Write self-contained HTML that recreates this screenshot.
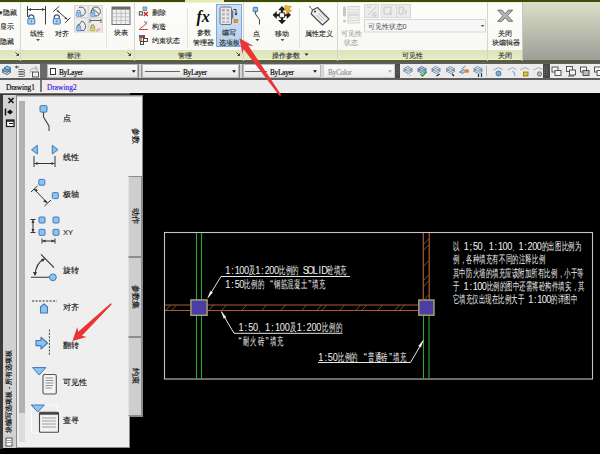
<!DOCTYPE html>
<html><head><meta charset="utf-8">
<style>
*{margin:0;padding:0;box-sizing:border-box}
html,body{width:600px;height:454px;overflow:hidden;background:#000;font-family:"Liberation Sans",sans-serif}
.a{position:absolute}
#rib{left:0;top:0;width:600px;height:61px;background:linear-gradient(#fdfdfa,#f7f8f3)}
.t{position:absolute;font-size:7.3px;line-height:9px;color:#262626;white-space:nowrap;-webkit-text-stroke:0.12px currentColor}
.ti{color:#333}
.cmbt{color:#4a4a4a;-webkit-text-stroke:0 !important}
.g{color:#aaa}
.sep{position:absolute;width:1px;background:#e2e2e2}
.psep{position:absolute;width:1px;background:#d6d6d0;top:2px;height:59px}
.ttl{position:absolute;top:50px;height:10px;background:linear-gradient(#dce3bc,#e6ecc8)}
.dl{position:absolute;font-size:6px;color:#444}
.cmb{position:absolute;top:64px;height:14px;background:linear-gradient(#fdfdfd,#e4e4e4);border:1px solid #b8b8b8}
.tri{position:absolute;width:0;height:0;border-left:3px solid transparent;border-right:3px solid transparent;border-top:4px solid #111}
.ico{position:absolute}
.pt{position:absolute;font-size:8px;line-height:9px;color:#141414;white-space:nowrap;-webkit-text-stroke:0.15px currentColor}
.dt{position:absolute;font-size:8px;line-height:9px;color:#e6e6e6;white-space:nowrap;letter-spacing:0}
</style></head><body>
<!-- ribbon -->
<div id="rib" class="a"></div>
<div class="a" style="left:0;top:0;width:600px;height:2px;background:#3d4a0c"></div>
<div class="a" style="left:185px;top:0;width:39px;height:2px;background:#e4ecb4"></div>
<div class="a" style="left:0;top:2px;width:523px;height:1px;background:#eef3d2"></div>
<!-- right gradient area -->
<div class="a" style="left:523px;top:2px;width:77px;height:59px;background:linear-gradient(#dcdfc6,#9c9d98)"></div>
<!-- title bars -->
<div class="ttl" style="left:0;width:523px"></div>
<div class="a" style="left:0;top:59px;width:523px;height:1px;background:#eef5c0"></div>
<div class="a" style="left:0;top:60px;width:600px;height:2px;background:linear-gradient(#5e6a2a,#505440)"></div>
<!-- panel separators -->
<div class="psep" style="left:20px"></div>
<div class="psep" style="left:134px"></div>
<div class="psep" style="left:243px"></div>
<div class="psep" style="left:337px"></div>
<div class="psep" style="left:487px"></div>
<div class="a" style="left:522px;top:2px;width:1px;height:59px;background:#c8c8c0"></div>
<!-- inner separators -->
<div class="sep" style="left:106px;top:8px;height:40px"></div>
<div class="sep" style="left:187px;top:8px;height:40px"></div>
<div class="sep" style="left:299px;top:8px;height:40px"></div>



<!-- ribbon icons -->
<div class="a" style="left:216px;top:4px;width:26px;height:43px;background:linear-gradient(#cfe2f7,#b5d2f0);border:1px solid #7fa6d6"></div>
<svg class="a" style="left:0;top:0" width="600" height="61" viewBox="0 0 600 61">
 <defs>
  <g id="lock"><path d="M1.5 4.5 V3 a2.5 2.5 0 0 1 5 0 V4.5" fill="none" stroke="#3e5878" stroke-width="1.3"/><rect x="0.5" y="4.3" width="7" height="5.5" rx="0.8" fill="#a6d2f4" stroke="#3a74b0" stroke-width="0.9"/><rect x="3.5" y="6" width="1" height="2" fill="#3a74b0"/></g>
 </defs>
 <!-- linear -->
 <path d="M27.5 6 V17 M45.5 6 V24.5 M28 9.5 H45" stroke="#404040" stroke-width="1" fill="none"/>
 <path d="M28 9.5 l3 -1.6 v3.2z M45 9.5 l-3 -1.6 v3.2z" fill="#404040"/>
 <use href="#lock" x="27.3" y="14.3"/>
 <path d="M36 39 l2 2.2 l2 -2.2z" fill="#555"/>
 <!-- align -->
 <path d="M56.5 10 L67.5 19.5 M53.2 11.7 L59.2 6.2 M65.2 22.8 L70.3 17.7" stroke="#404040" stroke-width="1" fill="none"/>
 <path d="M56.5 10 l3.2 1 l-1.4 1.6z M67.5 19.5 l-3.2 -1 l1.4 -1.6z" fill="#404040"/>
 <use href="#lock" x="52.8" y="14.3"/>
 <!-- 4 grid -->
 <g fill="#ededed" stroke="#d8d8d8" stroke-width="1">
  <rect x="74.5" y="5.5" width="13.5" height="12"/><rect x="88.5" y="5.5" width="14" height="12"/>
  <rect x="74.5" y="18" width="13.5" height="14"/><rect x="88.5" y="18" width="14" height="14"/>
 </g>
 <g fill="none" stroke="#555" stroke-width="0.9">
  <path d="M79 7.5 A4.5 4.5 0 1 1 80 16"/>
  <circle cx="96" cy="11.5" r="4.5"/><path d="M92 8 L99 14"/>
  <path d="M77 30.5 L84 30.5 M78 26 L82 21 A6 6 0 0 1 84 30.5"/>
  <path d="M90 20.5 H101 M90 19 V23 M101 19 V23"/>
 </g>
 <g transform="translate(76,10) scale(0.65)"><use href="#lock"/></g>
 <g transform="translate(90,10) scale(0.65)"><use href="#lock"/></g>
 <g transform="translate(76,24.5) scale(0.65)"><use href="#lock"/></g>
 <g transform="translate(90,24.5) scale(0.65)"><path d="M1.5 4.5 V3 a2.5 2.5 0 0 1 5 0 V4.5" fill="none" stroke="#5a5a30" stroke-width="1.3"/><rect x="0.5" y="4.3" width="7" height="5.5" rx="0.8" fill="#e8d050" stroke="#9a8a20" stroke-width="0.9"/></g>
 <text x="96.5" y="31" font-size="5" fill="#c03030" font-family="Liberation Serif" font-style="italic">f2</text>
 <!-- table -->
 <rect x="112" y="7" width="18" height="17.5" fill="#f0f0f0" stroke="#6e6e6e" stroke-width="1"/>
 <rect x="112" y="7" width="18" height="2.6" fill="#6a6a6a"/>
 <path d="M112.5 13.3 H129.5 M112.5 16.9 H129.5 M112.5 20.6 H129.5 M116.5 9.6 V24 M121 9.6 V24 M125.5 9.6 V24" stroke="#b8b8b8" stroke-width="0.8"/>
 <!-- delete/construct/state -->
 <rect x="143" y="7" width="3.8" height="3.4" fill="#8cc0e8" stroke="#4a80b0" stroke-width="0.7"/>
 <rect x="139.3" y="11.8" width="3" height="3.2" fill="none" stroke="#333" stroke-width="0.9"/>
 <path d="M143.8 12 L147.8 16 M147.8 12 L143.8 16" stroke="#d02020" stroke-width="1.3"/>
 <path d="M139 29.5 H148 M139.5 29 L146 24" stroke="#d03030" stroke-width="0.9"/>
 <path d="M144.5 21 l1 2.5 M147 21.5 l-1 3" stroke="#3080c0" stroke-width="0.9"/>
 <path d="M146.5 22.5 l-1.2 2.5" stroke="#e08020" stroke-width="0.9"/>
 <rect x="139" y="35" width="3" height="3" fill="#3070b0"/><rect x="142" y="35" width="3" height="3" fill="#c03040"/>
 <rect x="139" y="38" width="3" height="3" fill="#d09040"/><rect x="143.5" y="38.5" width="4" height="3" fill="none" stroke="#333" stroke-width="0.9"/>
 <rect x="140.5" y="41.5" width="3" height="3" fill="none" stroke="#333" stroke-width="0.9"/>
 <!-- fx -->
 <text x="196.5" y="21.5" font-size="16" font-weight="bold" font-family="Liberation Serif" font-style="italic" fill="#111">fx</text>
 <!-- palette icon -->
 <rect x="220" y="7" width="11.5" height="17.5" rx="1.5" fill="#e8e8ec" stroke="#6a7280" stroke-width="1"/>
 <g fill="#c8a0a0"><rect x="222" y="9" width="2.8" height="2.5"/><rect x="226.5" y="9" width="2.8" height="2.5" fill="#d8a090"/></g>
 <g fill="#b8b8c0"><rect x="222" y="13" width="2.8" height="2.5"/><rect x="226.5" y="13" width="2.8" height="2.5"/><rect x="222" y="17" width="2.8" height="2.5"/><rect x="226.5" y="17" width="2.8" height="2.5"/><rect x="222" y="21" width="2.8" height="2"/><rect x="226.5" y="21" width="2.8" height="2"/></g>
 <rect x="231.5" y="10.5" width="1.8" height="8" fill="#6a7280"/>
 <path d="M233.5 9.5 H236 V14.5" fill="none" stroke="#222" stroke-width="0.9"/><path d="M234.5 13.5 h3 l-1.5 2z" fill="#222"/>
 <rect x="234" y="19.3" width="3.6" height="3.4" fill="#f0a020" stroke="#c07010" stroke-width="0.6"/>
 <!-- point -->
 <rect x="253.2" y="7.3" width="4.4" height="4.4" rx="0.6" fill="#8cc4ee" stroke="#3a6fa8" stroke-width="0.9"/>
 <path d="M255.4 11.7 V14 L259.5 19.5 V24.5" fill="none" stroke="#404040" stroke-width="1"/>
 <path d="M255.3 39 l2 2.2 l2 -2.2z" fill="#555"/>
 <!-- move -->
 <g fill="#1e1e1e">
  <path d="M282 6 l-4 4.2 h8z M282 24.2 l-4 -4.2 h8z M272.6 15.1 l4.2 -4 v8z M291 15.1 l-4.2 -4 v8z"/>
  <rect x="280.8" y="9.5" width="2.4" height="11.5"/><rect x="276" y="13.9" width="11.5" height="2.4"/>
 </g>
 <rect x="279.6" y="12.8" width="4.8" height="4.6" fill="#fff" stroke="#333" stroke-width="0.9"/>
 <path d="M285 5.5 L291.5 6.5 L288.5 9.5 L291.5 10.5 L285.5 15 L287.5 11 L284.5 10z" fill="#f2b52e" stroke="#a8700c" stroke-width="0.5"/>
 <path d="M280.5 39 l2 2.2 l2 -2.2z" fill="#555"/>
 <!-- tag -->
 <path d="M309.5 6 C310.5 9 313 10 315.5 11.5" fill="none" stroke="#444" stroke-width="0.9"/>
 <path d="M312.5 10 L317.5 7.5 L329 19 L322.5 25 L311.2 14z" fill="#eceef2" stroke="#4a4a4a" stroke-width="1.1" stroke-linejoin="round"/>
 <circle cx="315" cy="11.5" r="1.1" fill="#444"/>
 <path d="M318.5 13.5 L324.5 19.5 M320.3 11.8 L326.3 17.8 M316.8 15.3 L322.3 20.8" stroke="#8a9aa0" stroke-width="0.7"/>
 <!-- visibility state (disabled) -->
 <rect x="343" y="6.5" width="3" height="10" rx="1.2" fill="#c8c8c8"/><circle cx="344.5" cy="21" r="1.6" fill="#c8c8c8"/>
 <rect x="348" y="6.5" width="11" height="16.5" fill="#f4f4f4" stroke="#cfcfcf" stroke-width="0.9"/>
 <path d="M349 9.5 H358 M349 12 H358 M349 15 H358 M349 18 H358 M349 20.5 H358" stroke="#d0d0d0" stroke-width="0.8"/>
 <rect x="348.5" y="13.5" width="10" height="2.6" fill="#dadada"/>
 <g fill="#ececec" stroke="#d8d8d8" stroke-width="1">
  <rect x="364.5" y="4.5" width="14" height="13"/><rect x="381" y="4.5" width="15.5" height="13"/><rect x="396.5" y="4.5" width="14" height="13"/>
 </g>
 <g fill="none" stroke="#c4c4c4" stroke-width="0.9"><path d="M367 7 H371 M368 15 L376 7 M373 13 h3 v3 h-3z"/><path d="M384 7 h7 v7 h-7z M389 12 l3 3"/><path d="M399 7 h4 v7 h-4z M404 9 l3 3 l-2 0.5 l1 2"/></g>
 <rect x="364.5" y="19.5" width="121" height="12.5" fill="#f7f7f7" stroke="#d6d6d6" stroke-width="1"/>
 <path d="M480.8 25 l1.8 2 l1.8 -2z" fill="#555"/>
 <!-- X -->
 <path d="M497.7 10.1 h4.2 l3.25 3.6 l3.25 -3.6 h4.3 l-5.3 5.6 l5.3 5.6 h-4.3 l-3.25 -3.6 l-3.25 3.6 h-4.2 l5.3 -5.6z" fill="#b4b4b4" stroke="#666" stroke-width="0.9" stroke-linejoin="round"/>
 <!-- dialog launchers -->
 <path d="M15.5 52.5 l3 3 M18.5 53.5 v2 h-2" stroke="#333" stroke-width="0.9" fill="none"/>
 <path d="M127.5 52.5 l3 3 M130.5 53.5 v2 h-2" stroke="#333" stroke-width="0.9" fill="none"/>
 <path d="M236.5 52.5 l3 3 M239.5 53.5 v2 h-2" stroke="#333" stroke-width="0.9" fill="none"/>
 <path d="M304.5 53.5 l2 2.2 l2 -2.2z" fill="#222"/>
</svg>

<!-- ribbon text -->
<div class="t" style="right:583px;top:7.5px">▾隐藏</div>
<div class="t" style="right:586.5px;top:21.5px">显示</div>
<div class="t" style="right:586.5px;top:36.5px">隐藏</div>
<div class="t" style="left:36.5px;top:28.5px;transform:translateX(-50%)">线性</div>
<div class="t" style="left:61.8px;top:28.5px;transform:translateX(-50%)">对齐</div>
<div class="t" style="left:121.4px;top:28.200000000000003px;transform:translateX(-50%)">块表</div>
<div class="t" style="left:152.3px;top:7.6px">删除</div>
<div class="t" style="left:152.3px;top:21.8px">构造</div>
<div class="t" style="left:152.3px;top:36.0px">约束状态</div>
<div class="t" style="left:203.5px;top:28.299999999999997px;transform:translateX(-50%)">参数</div>
<div class="t" style="left:203.8px;top:38.2px;transform:translateX(-50%)">管理器</div>
<div class="t" style="left:229.2px;top:28.299999999999997px;transform:translateX(-50%)">编写</div>
<div class="t" style="left:229.1px;top:38.2px;transform:translateX(-50%)">选项板</div>
<div class="t" style="left:256.8px;top:28.5px;transform:translateX(-50%)">点</div>
<div class="t" style="left:282px;top:28.5px;transform:translateX(-50%)">移动</div>
<div class="t" style="left:318.6px;top:28.5px;transform:translateX(-50%)">属性定义</div>
<div class="t g" style="left:351.2px;top:28.5px;transform:translateX(-50%)">可见性</div>
<div class="t g" style="left:351px;top:38.1px;transform:translateX(-50%)">状态</div>
<div class="t cmbt" style="left:367.5px;top:21.5px">可见性状态0</div>
<div class="t" style="left:504.8px;top:28.5px;transform:translateX(-50%)">关闭</div>
<div class="t" style="left:505.6px;top:37.9px;transform:translateX(-50%)">块编辑器</div>
<div class="t ti" style="left:74px;top:50.5px;transform:translateX(-50%)">标注</div>
<div class="t ti" style="left:185.2px;top:50.5px;transform:translateX(-50%)">管理</div>
<div class="t ti" style="left:285.8px;top:50.5px;transform:translateX(-50%)">操作参数</div>
<div class="t ti" style="left:412px;top:50.5px;transform:translateX(-50%)">可见性</div>
<div class="t ti" style="left:505px;top:50.5px;transform:translateX(-50%)">关闭</div>

<!-- toolbar band -->
<div class="a" style="left:0;top:62px;width:600px;height:18px;background:#5e5e5e"></div>
<div class="a" style="left:0;top:64px;width:40px;height:14px;background:#ececec"></div>
<div class="a" style="left:40px;top:64px;width:7px;height:14px;background:#6a6a6a"></div>
<div class="cmb" style="left:47px;width:91px"></div>
<div class="a" style="left:138px;top:64px;width:4px;height:14px;background:#d8d8d8;border-left:1px solid #888;border-right:1px solid #999"></div>
<div class="cmb" style="left:142px;width:97px"></div>
<div class="a" style="left:239px;top:64px;width:4px;height:14px;background:#d8d8d8;border-left:1px solid #888;border-right:1px solid #999"></div>
<div class="cmb" style="left:243px;width:78px"></div>
<div class="a" style="left:321px;top:64px;width:2px;height:14px;background:#d8d8d8"></div>
<div class="cmb" style="left:323px;width:72px;background:linear-gradient(#fbfbfb,#ececec);border-color:#cfcfcf"></div>
<div class="a" style="left:395px;top:64px;width:5px;height:14px;background:#4a4a4a"></div>
<div class="a" style="left:400px;top:64px;width:143px;height:14px;background:#ececec"></div>
<div class="a" style="left:543px;top:64px;width:7px;height:14px;background:#4a4a4a"></div>
<div class="a" style="left:550px;top:64px;width:50px;height:14px;background:#ececec"></div>

<!-- tab row -->
<div class="a" style="left:0;top:80px;width:600px;height:13px;background:#ebebeb"></div>
<div class="a" style="left:0;top:81px;width:40px;height:11px;background:#ededed"></div>
<div class="a" style="left:40px;top:80px;width:2px;height:13px;background:#7a7a7a"></div>
<div class="a" style="left:42px;top:81px;width:39px;height:12px;background:#f5e9ef"></div>
<div class="a" style="left:0;top:92px;width:600px;height:1px;background:#f4f4f4"></div>

<!-- toolbar content -->
<svg class="a" style="left:0;top:60px" width="600" height="22" viewBox="0 60 600 22">
 <g stroke-width="0.8">
  <path d="M2 72 l4 -2.5 l5 2.5 l-4 2.5z" fill="#e8e8e8" stroke="#444"/>
  <path d="M2 70 l4 -2.5 l5 2.5 l-4 2.5z" fill="#6aa8dc" stroke="#2a5a90"/>
  <path d="M4 68 l3 -2 l4 2 l-3 2z" fill="#8cc0ea" stroke="#2a5a90"/>
  <path d="M15.5 67 h3.5 M15.5 67 l1.5 -1.2 M15.5 67 l1.5 1.2" stroke="#222" fill="none"/>
  <path d="M18.5 69.5 h5 l1.5 1 l-1.5 1 h-5 M18.5 72 h5 l1.5 1 l-1.5 1 h-5 M18.5 74.5 h5 l1.5 1 l-1.5 1 h-5" stroke="#444" fill="none" stroke-width="0.7"/>
  <path d="M29.5 70.5 l4 -2.5 l4.5 2.2 M29.5 72.5 l3 -1.5" stroke="#999" fill="none"/>
  <path d="M35 66.5 l2.5 2" stroke="#777" fill="none"/>
  <rect x="32.5" y="72" width="6" height="5" fill="#eee" stroke="#333"/>
 </g>
 <rect x="50.5" y="68.5" width="5" height="6" fill="#fff" stroke="#222" stroke-width="0.9"/>
 <path d="M131.8 70.2 h4 l-2 2.6z" fill="#111"/>
 <path d="M145 71.5 H180" stroke="#666" stroke-width="1"/>
 <path d="M232 70.2 h4 l-2 2.6z" fill="#111"/>
 <path d="M245 71.5 H267" stroke="#666" stroke-width="1"/>
 <path d="M313 70.2 h4 l-2 2.6z" fill="#111"/>
 <path d="M388 70.2 h4 l-2 2.6z" fill="#aaa"/>
 <path d="M396.5 66 v10 M398.5 66 v10" stroke="#777" stroke-width="0.7" stroke-dasharray="1 1"/>
 <path d="M544.5 66 v10 M546.5 66 v10" stroke="#777" stroke-width="0.7" stroke-dasharray="1 1"/>
 <path d="M486.5 65.5 v11" stroke="#b8b8b8" stroke-width="1"/>
 <g stroke-width="0.8">
  <!-- 6 layer icons -->
  <g transform="translate(402.5,0)"><path d="M1 71 l4 -2.5 l5 2.5 l-4 2.5z M1 69 l4 -2.5 l5 2.5 l-4 2.5z" fill="#e4eaf0" stroke="#5a7a9a"/><path d="M4 74 q3 3 6 0 l-2 2z" fill="#d07020"/></g>
  <g transform="translate(416.5,0)"><path d="M1 71 l4 -2.5 l5 2.5 l-4 2.5z M1 69 l4 -2.5 l5 2.5 l-4 2.5z" fill="#b4cce0" stroke="#4a6a8a"/><path d="M4 74 l2 2 l4 -4" stroke="#20a020" stroke-width="1.4" fill="none"/></g>
  <g transform="translate(430.5,0)"><path d="M1 71 l4 -2.5 l5 2.5 l-4 2.5z M1 69 l4 -2.5 l5 2.5 l-4 2.5z" fill="#e4eaf0" stroke="#5a7a9a"/><path d="M6 76 l3 -2" stroke="#222" stroke-width="1.2"/></g>
  <g transform="translate(445,0)"><path d="M1 71 l4 -2.5 l5 2.5 l-4 2.5z M1 69 l4 -2.5 l5 2.5 l-4 2.5z" fill="#e4eaf0" stroke="#5a7a9a"/><path d="M7 74 l2 2" stroke="#222" stroke-width="1.2"/></g>
  <g transform="translate(458.5,0)"><path d="M1 72 l4 -2.5 l3 1.5 l-4 2.5z" fill="#b4cce0" stroke="#4a6a8a"/><path d="M3 69 l4 -3" stroke="#3a6a9a"/><circle cx="8.5" cy="71" r="2" fill="#f08020"/></g>
  <g transform="translate(472.5,0)"><path d="M1 71 l4 -2.5 l5 2.5 l-4 2.5z M1 69 l4 -2.5 l5 2.5 l-4 2.5z" fill="#e4eaf0" stroke="#5a7a9a"/><path d="M6 74 v3 M9 73 v4" stroke="#1a3a6a" stroke-width="1.2"/></g>
  <!-- 4 layer-off icons -->
  <g transform="translate(492.5,0)"><path d="M1 70 l5 -2.5 l4 2" fill="none" stroke="#888"/><circle cx="6" cy="73.5" r="2.5" fill="#7ab0e0" stroke="#2a6aa0"/></g>
  <g transform="translate(506.5,0)"><path d="M1 70 l5 -2.5 l4 2" fill="none" stroke="#999"/><path d="M6 71 q3 2 2 5" fill="none" stroke="#7ab0e0" stroke-width="1.2"/></g>
  <g transform="translate(519,0)"><path d="M1 70 l5 -2.5 l4 2" fill="none" stroke="#999"/><rect x="4.5" y="72" width="4.5" height="4" fill="#e8c040" stroke="#8a7010"/></g>
  <g transform="translate(532.5,0)"><path d="M1 70 l5 -2.5 l4 2" fill="none" stroke="#999"/><circle cx="7" cy="74" r="2.2" fill="#b0c0b0" stroke="#607060"/></g>
  <!-- 4 block icons -->
  <g fill="#f4f4f4" stroke="#333">
   <rect x="552" y="67" width="6" height="5"/><rect x="555" y="70.5" width="6" height="5"/>
   <rect x="566.5" y="66.5" width="6" height="5"/><rect x="569.5" y="70" width="6" height="5"/><path d="M568 76 h6" fill="none"/>
   <rect x="580.5" y="67" width="6" height="5"/><rect x="583" y="70.5" width="6" height="5" fill="#bbb"/>
   <rect x="594.5" y="67" width="6" height="5"/><rect x="597" y="70.5" width="6" height="5"/>
  </g>
 </g>
</svg>
<div class="a" style="left:59px;top:67.5px;font:7.3px/9px 'Liberation Serif',serif;letter-spacing:-0.25px;-webkit-text-stroke:0.2px currentColor;color:#111">ByLayer</div>
<div class="a" style="left:183px;top:67.5px;font:7.3px/9px 'Liberation Serif',serif;letter-spacing:-0.25px;-webkit-text-stroke:0.2px currentColor;color:#111">ByLayer</div>
<div class="a" style="left:270px;top:67.5px;font:7.3px/9px 'Liberation Serif',serif;letter-spacing:-0.25px;-webkit-text-stroke:0.2px currentColor;color:#111">ByLayer</div>
<div class="a" style="left:328px;top:67.5px;font:7.3px/9px 'Liberation Serif',serif;letter-spacing:-0.25px;-webkit-text-stroke:0.2px currentColor;color:#999">ByColor</div>
<div class="a" style="left:6px;top:83px;font:7.3px/9px 'Liberation Serif',serif;letter-spacing:-0.05px;-webkit-text-stroke:0.2px currentColor;color:#111">Drawing1</div>
<div class="a" style="left:47px;top:83px;font:7.3px/9px 'Liberation Serif',serif;letter-spacing:0.05px;-webkit-text-stroke:0.2px currentColor;color:#3434d8">Drawing2</div>

<!-- palette -->
<div class="a" style="left:0;top:93px;width:130px;height:1px;background:#6a6a6a"></div>
<div class="a" style="left:0;top:94px;width:130px;height:1px;background:#3c3c3c"></div>
<div class="a" style="left:0;top:94px;width:3px;height:355px;background:#3a3a3a"></div>
<div class="a" style="left:3px;top:95px;width:13px;height:353px;background:#d2d2d2"></div>
<div class="a" style="left:16px;top:95px;width:127px;height:353px;background:#8a8a8a"></div>
<div class="a" style="left:130px;top:417px;width:13px;height:32px;background:#000"></div>
<div class="a" style="left:17px;top:96px;width:125px;height:80px;background:#efefef;border-top:1px solid #c4c4c4"></div>
<div class="a" style="left:17px;top:96px;width:112px;height:351px;background:#efefef;border-top:1px solid #c4c4c4"></div>
<div class="a" style="left:128px;top:176px;width:14px;height:81px;background:#cecece;border:1px solid #8e8e8e;border-left-color:#e2e2e2"></div>
<div class="a" style="left:128px;top:257px;width:14px;height:80px;background:#cecece;border:1px solid #8e8e8e;border-left-color:#e2e2e2"></div>
<div class="a" style="left:128px;top:337px;width:14px;height:79px;background:#cecece;border:1px solid #8e8e8e;border-left-color:#e2e2e2"></div>
<!-- scrollbar -->
<div class="a" style="left:19px;top:101px;width:6px;height:312px;background:#b2b2b2"></div>
<div class="a" style="left:19px;top:413px;width:6px;height:29px;background:#dcdcdc"></div>

<!-- palette content -->
<svg class="a" style="left:0;top:90px" width="143" height="364" viewBox="0 90 143 364">
 <!-- strip icons -->
 <path d="M8.5 98 l5 5 M13.5 98 l-5 5" stroke="#111" stroke-width="1.6"/>
 <path d="M5.5 108.5 v7" stroke="#111" stroke-width="1.5"/><path d="M7 112 l3 -2.5 v5z M13 112 l-3 -2.5 v5z" fill="#111"/>
 <rect x="6.5" y="120" width="7.5" height="6.5" fill="#fff" stroke="#111" stroke-width="1.2"/><path d="M6.5 121 h7.5" stroke="#111" stroke-width="1.5"/><path d="M9 123.5 h4" stroke="#111" stroke-width="1"/>
 <!-- strip bottom icon -->
 <rect x="6" y="438" width="6" height="8" fill="#fff" stroke="#333" stroke-width="0.8"/><path d="M7 440.5 h4 M7 442.5 h4" stroke="#555" stroke-width="0.6"/>
 <!-- point -->
 <rect x="40" y="105.6" width="7" height="6.5" rx="1.2" fill="#8cc4ee" stroke="#3f78b8" stroke-width="1"/>
 <path d="M43.5 112 V117 L49 126 V131" fill="none" stroke="#444" stroke-width="1.1"/>
 <!-- linear -->
 <path d="M37.3 145.3 L31.5 149.7 L37.3 154z M52.3 145.3 L58 149.7 L52.3 154z" fill="#8cc4ee" stroke="#3f78b8" stroke-width="1"/>
 <path d="M34 156 V167 M55 156 V167 M34.5 163.5 H54.5" stroke="#333" stroke-width="1"/>
 <path d="M34.5 163.5 l3 -1.6 v3.2z M54.5 163.5 l-3 -1.6 v3.2z" fill="#333"/>
 <!-- polar -->
 <rect x="38.8" y="179.4" width="6" height="5.8" rx="1" fill="#8cc4ee" stroke="#3f78b8" stroke-width="1"/>
 <rect x="52.3" y="192.6" width="6" height="6" rx="1" fill="#8cc4ee" stroke="#3f78b8" stroke-width="1"/>
 <path d="M34 189 L47 202.5 M31 192 L37.5 186 M44.5 206 L51 200" stroke="#333" stroke-width="1"/>
 <path d="M34 189 l3.3 1 l-1.2 1.5z M47 202.5 l-3.3 -1 l1.2 -1.5z" fill="#333" stroke="#333" stroke-width="0.8"/>
 <!-- XY -->
 <g fill="#8cc4ee" stroke="#3f78b8" stroke-width="1">
  <rect x="39" y="217" width="6" height="6" rx="1"/><rect x="53" y="217" width="6" height="6" rx="1"/>
  <rect x="39" y="229.3" width="6" height="6" rx="1"/><rect x="53" y="229.3" width="6" height="6" rx="1"/>
 </g>
 <path d="M33 219.5 V232.5 M30.5 219.5 H35.5 M30.5 232.5 H35.5 M42 241 H55 M42 238.5 V243.5 M55 238.5 V243.5" stroke="#333" stroke-width="1"/>
 <path d="M33 220 l-1.5 3 h3z M33 232 l-1.5 -3 h3z M42.5 241 l3 -1.5 v3z M54.5 241 l-3 -1.5 v3z" fill="#333"/>
 <!-- rotate -->
 <path d="M31 277.3 H49.5 M41 254.4 L54 267.6" stroke="#333" stroke-width="1.1"/>
 <path d="M35 275 Q36 263 44 259" fill="none" stroke="#333" stroke-width="1.2"/>
 <path d="M35 276 l-2 -4 h4z M45 258.5 l-4 0.5 l2 3z" fill="#333"/>
 <circle cx="52.9" cy="277.3" r="3.4" fill="#8cc4ee" stroke="#3f78b8" stroke-width="1"/>
 <!-- align -->
 <path d="M32 301 H57" stroke="#333" stroke-width="1" stroke-dasharray="2.2 1.3"/>
 <path d="M40.5 313 V307 L44 303.8 L47.5 307 V313z" fill="#8cc4ee" stroke="#3f78b8" stroke-width="1.1" stroke-linejoin="round"/>
 <!-- flip -->
 <path d="M49.4 329.6 V354.7" stroke="#444" stroke-width="1" stroke-dasharray="2 1.3"/>
 <path d="M36 340.5 H41 V337.2 L47.5 343 L41 349 V345.6 H36z" fill="#8cc4ee" stroke="#3f78b8" stroke-width="1.1" stroke-linejoin="round"/>
 <!-- visibility -->
 <path d="M32.5 367.6 H45.8 L39.2 375z" fill="#8cc4ee" stroke="#3f78b8" stroke-width="1"/>
 <rect x="43" y="374.5" width="13.3" height="19.5" rx="1.5" fill="#f4f4f4" stroke="#555" stroke-width="1.1"/>
 <path d="M45.5 378 H53 M45.5 380.5 H53.5 M45.5 383 H53.5 M45.5 385.5 H53 M45.5 388 H52" stroke="#7a7a7a" stroke-width="0.8"/>
 <!-- lookup -->
 <rect x="31.5" y="405" width="26" height="28" fill="none" stroke="#fafafa" stroke-width="1"/>
 <path d="M31.2 405 H44.4 L37.8 412z" fill="#8cc4ee" stroke="#3f78b8" stroke-width="1"/>
 <rect x="39.5" y="412.2" width="19" height="20" rx="1" fill="#f2f2f2" stroke="#444" stroke-width="1.1"/>
 <rect x="39.5" y="412.2" width="19" height="2.5" fill="#444"/>
 <path d="M42 418 H56 M42 421 H56 M42 424 H56 M42 427 H56" stroke="#888" stroke-width="0.8"/>
</svg>
<div class="pt" style="left:63px;top:114px">点</div>
<div class="pt" style="left:63px;top:153px">线性</div>
<div class="pt" style="left:63px;top:190px">极轴</div>
<div class="pt" style="left:63px;top:228px;font-size:7.6px;-webkit-text-stroke:0.05px">XY</div>
<div class="pt" style="left:63px;top:266px">旋转</div>
<div class="pt" style="left:63px;top:303px">对齐</div>
<div class="pt" style="left:63px;top:341px">翻转</div>
<div class="pt" style="left:63px;top:378px">可见性</div>
<div class="pt" style="left:63px;top:416px">查寻</div>
<div class="a" style="left:131px;top:128px;font-size:8px;line-height:9px;writing-mode:vertical-rl;text-orientation:sideways;color:#111;-webkit-text-stroke:0.2px #111">参数</div>
<div class="a" style="left:130.5px;top:208px;font-size:8px;line-height:9px;writing-mode:vertical-rl;text-orientation:sideways;color:#111;-webkit-text-stroke:0.2px #111">动作</div>
<div class="a" style="left:130.5px;top:285px;font-size:8px;line-height:9px;writing-mode:vertical-rl;text-orientation:sideways;color:#111;-webkit-text-stroke:0.2px #111">参数集</div>
<div class="a" style="left:130.5px;top:368px;font-size:8px;line-height:9px;writing-mode:vertical-rl;text-orientation:sideways;color:#111;-webkit-text-stroke:0.2px #111">约束</div>
<div class="a" style="left:4px;top:343px;width:10px;height:90px;overflow:hidden"><div style="position:absolute;left:0;top:90px;width:90px;height:9px;transform-origin:0 0;transform:rotate(-90deg);font-size:7px;line-height:9px;color:#111;white-space:nowrap;-webkit-text-stroke:0.2px #111">块编写选项板 - 所有选项板</div></div>

<!-- drawing frame -->
<svg class="a" style="left:0;top:0" width="600" height="454" viewBox="0 0 600 454">
  <rect x="164.5" y="232.5" width="428" height="146.5" fill="none" stroke="#c4c4c4" stroke-width="1.1"/>
  <!-- green columns -->
  <path d="M196.5 233 V379 M201.5 233 V379 M423.5 316 V379 M429 316 V379" stroke="#38a238" stroke-width="1.1"/>
  <!-- brown walls -->
  <path d="M165 305 H418 M165 310.5 H418 M423.3 233 V299 M429.2 233 V299" stroke="#a85f2c" stroke-width="1.2"/>
  <path d="M166 310 l4.5 -5 M172 310 l4.5 -5 M209 310 l4.5 -5 M222 310 l4.5 -5 M242 310 l4.5 -5 M262 310 l4.5 -5 M281 310 l4.5 -5 M302 310 l4.5 -5 M317 310 l4.5 -5 M322 310 l4.5 -5 M340 310 l4.5 -5 M356 310 l4.5 -5 M362 310 l4.5 -5 M378 310 l4.5 -5 M395 310 l4.5 -5 M400 310 l4.5 -5 M424 244 l4.5 -5 M424 250 l4.5 -5 M424 266 l4.5 -5 M424 280 l4.5 -5 M424 286 l4.5 -5 M424 300 l4.5 -5" stroke="#8a7468" stroke-width="0.7"/>
  <!-- squares -->
  <rect x="190.9" y="299.9" width="16.2" height="15.4" fill="#4b3ca6" stroke="#a8a86c" stroke-width="1.4"/>
  <rect x="418.8" y="300" width="15.2" height="15.2" fill="#4b3ca6" stroke="#a8a86c" stroke-width="1.4"/>
  <!-- leaders -->
  <g stroke="#e6e6e6" stroke-width="1" fill="none">
   <path d="M208 297.5 L221 276.5 H350"/>
   <path d="M221.3 311.5 L234 333.3 H342.5"/>
   <path d="M423.3 340.5 L410.5 362.5 H318"/>
  </g>
  <g fill="#f0f0f0">
   <path d="M207.4 298.6 L212.9 292.6 L210.3 291.0z"/>
   <path d="M221.0 311.0 L223.7 318.7 L226.3 317.2z"/>
   <path d="M423.6 339.8 L418.3 346.0 L420.9 347.5z"/>
  </g>
</svg>

<!-- drawing text -->
<svg class="a" style="left:0;top:0" width="600" height="454" viewBox="0 0 600 454" font-family="Liberation Sans, sans-serif" fill="#f2f2f2" text-anchor="middle">
 <text transform="scale(0.8,1)" x="284.8 290.6 296.5 302.3 308.1 322.3 328.1 334.0 339.8 345.6 382.4 388.2 394.1 399.9 405.7" y="274.5" font-size="11.5">1:1001:200SOLID</text>
 <text transform="scale(0.58,1)" x="434.8 486.5 498.1 509.7 569.4 581.0 592.4" y="274.5" font-size="10.6">及比例的砼填充</text>
 <text transform="scale(0.8,1)" x="284.8 290.7 296.5 302.4 339.3 387.1" y="288" font-size="11.5">1:50“”</text>
 <text transform="scale(0.58,1)" x="426.9 438.5 450.1 477.8 489.4 501.0 512.6 524.1 543.8 555.4" y="288" font-size="10.6">比例的钢筋混凝土填充</text>
 <text transform="scale(0.8,1)" x="301.2 307.3 313.5 319.6 334.6 340.7 346.8 353.0 359.1 374.1 380.2 386.3 392.5 398.6" y="331.5" font-size="11.5">1:501:1001:200</text>
 <text transform="scale(0.58,1)" x="451.1 505.7 560.1 572.4 584.5" y="331.5" font-size="10.6">、及比例的</text>
 <text transform="scale(0.8,1)" x="300.0 333.7" y="345.5" font-size="11.5">“”</text>
 <text transform="scale(0.58,1)" x="424.5 437.0 449.5 470.8 483.3" y="345.5" font-size="10.6">耐火砖填充</text>
 <text transform="scale(0.8,1)" x="401.1 407.1 413.0 419.0 456.5 488.1" y="361" font-size="11.5">1:50“”</text>
 <text transform="scale(0.58,1)" x="587.9 599.7 611.4 639.7 651.4 663.2 683.3 695.0" y="361" font-size="10.6">比例的普通砖填充</text>
 <text transform="scale(0.8,1)" x="582.9 588.6 594.4 600.2 614.2 619.9 625.7 631.4 637.2 651.2 656.9 662.7 668.5 674.2" y="250.5" font-size="11.5">1;501:1001:200</text>
 <text transform="scale(0.58,1)" x="786.4 837.5 888.5 939.6 951.1 962.4 973.7 985.2 996.5" y="250.5" font-size="10.6">以、、的出图比例为</text>
 <text transform="scale(0.58,1)" x="786.4 797.8 809.0 820.4 831.8 843.1 854.5 865.9 877.1 888.5 899.9 911.3 922.7 934.1" y="263.5" font-size="10.6">例，各种填充有不同的注释比例</text>
 <text transform="scale(0.58,1)" x="786.3 797.7 808.8 820.2 831.4 842.8 854.0 865.3 876.6 887.9 899.1 910.5 921.7 933.1 944.2 955.6 966.8 978.2 989.5 1000.7" y="277" font-size="10.6">其中防火墙的填充应该附加所有比例，小于等</text>
 <text transform="scale(0.8,1)" x="582.7 588.4 594.1 599.7 605.4" y="290.2" font-size="11.5">1:100</text>
 <text transform="scale(0.58,1)" x="786.3 844.6 855.8 867.2 878.3 889.6 900.9 912.2 923.4 934.6 945.9 957.0 968.4 979.6 990.9 1002.0" y="290.2" font-size="10.6">于比例的图中还需将砼构件填实，其</text>
 <text transform="scale(0.8,1)" x="663.5 669.1 674.8 680.4 686.1" y="303" font-size="11.5">1:100</text>
 <text transform="scale(0.58,1)" x="786.3 797.4 808.6 819.8 830.9 842.0 853.3 864.3 875.6 886.7 897.9 955.7 967.0 978.1 989.2" y="303" font-size="10.6">它填充仅出现在比例大于的详图中</text>
</svg>

<!-- red arrows -->
<svg class="a" style="left:0;top:0" width="600" height="454" viewBox="0 0 600 454">
 <path d="M239.5 38.2 L253.5 46.0 L248.3 45.4 L281.0 94.6 L280.5 95.7 L279.4 95.8 L243.5 48.9 L242.4 54.0z" fill="#ea3535"/>
 <path d="M72.5 341.0 L77.2 327.1 L78.2 331.8 L110.4 303.4 L111.4 303.6 L111.6 304.6 L81.9 335.7 L86.6 336.9z" fill="#ea3535"/>
</svg>
</body></html>
